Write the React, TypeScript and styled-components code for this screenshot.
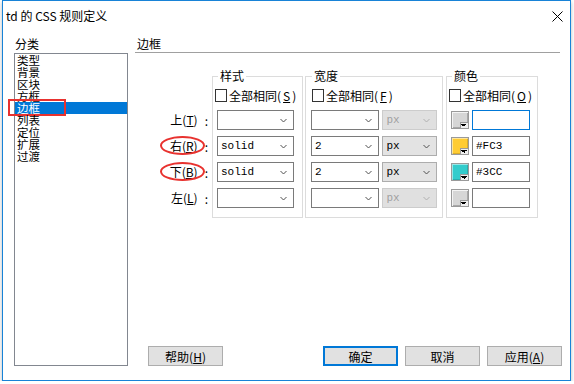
import React from "react";
import styled, { createGlobalStyle, css } from "styled-components";

const GlobalStyle = createGlobalStyle`
  html, body {
    margin: 0;
    padding: 0;
    background: #fff;
  }
  body {
    font-family: "Noto Sans CJK SC", "Liberation Sans", sans-serif;
    font-size: 12px;
    color: #000;
  }
`;

const Window = styled.div`
  box-sizing: border-box;
  width: 569px;
  height: 381px;
  margin-left: 2px;
  border: 1px solid #1883d7;
  background: #fff;
  box-shadow: 0 2px 4px rgba(0, 0, 0, 0.28);
  display: flex;
  flex-direction: column;
`;

const TitleBar = styled.div`
  height: 30px;
  flex: none;
  display: flex;
  align-items: center;
  justify-content: space-between;
  padding: 0 7px 0 3px;
`;

const Title = styled.span`
  font-size: 12px;
  line-height: 16px;
`;

const Main = styled.div`
  flex: 1;
  display: flex;
  align-items: flex-start;
  padding: 5px 0 0 11px;
`;

const CategoryColumn = styled.div`
  width: 114px;
  flex: none;
`;

const Caption = styled.div`
  line-height: 16px;
  height: 17px;
  padding-left: 1px;
`;

const CategoryList = styled.div`
  box-sizing: border-box;
  height: 313px;
  border: 1px solid #828790;
`;

// 12px pitch like the original bitmap font, so the glyphs sit tight
const CategoryItem = styled.div<{ $selected?: boolean }>`
  position: relative;
  height: 12px;
  line-height: 12px;
  font-size: 11.5px;
  padding-left: 2px;
  ${({ $selected }) =>
    $selected &&
    css`
      background: #0078d7;
      color: #fff;
    `}
`;

const Marker = styled.span`
  position: absolute;
  left: -7px;
  top: -3px;
  width: 58px;
  height: 17px;
  box-sizing: border-box;
  border: 2px solid #e8322f;
`;

const Panel = styled.div`
  width: 427px;
  height: 330px;
  margin-left: 7px;
  display: flex;
  flex-direction: column;
`;

const PanelTitle = styled.div`
  width: 423px;
  line-height: 16px;
  padding-left: 2px;
  border-bottom: 1px solid #a0a0a0;
`;

const Content = styled.div`
  display: flex;
  margin-top: 17px;
`;

const LabelColumn = styled.div`
  width: 77px;
  flex: none;
  padding-top: 40px;
  display: flex;
  flex-direction: column;
  gap: 6px;
`;

const LabelRow = styled.div`
  height: 20px;
  display: flex;
  align-items: center;
  justify-content: flex-end;
  padding-right: 4px;
`;

const LabelText = styled.span<{ $circled?: boolean }>`
  position: relative;
  line-height: 16px;
  ${({ $circled }) =>
    $circled &&
    css`
      &::before {
        content: "";
        position: absolute;
        left: -10px;
        right: -7px;
        top: -2px;
        bottom: -1px;
        border: 2px solid #e8322f;
        border-radius: 50%;
      }
    `}
`;

const Colon = styled.span`
  margin-left: 7px;
`;

const Group = styled.fieldset<{ $w: number; $pad: number; $gap: number }>`
  box-sizing: border-box;
  width: ${({ $w }) => $w}px;
  min-width: 0;
  margin: 0 0 0 ${({ $gap }) => $gap}px;
  padding: 6px ${({ $pad }) => $pad}px 9px;
  border: 1px solid #dcdcdc;
  flex: none;
`;

const Legend = styled.legend`
  line-height: 12px;
  padding: 0 2px;
  margin-left: 1px;
`;

const CheckRow = styled.label<{ $offset: number }>`
  height: 14px;
  display: flex;
  align-items: center;
  gap: 2px;
  margin-left: ${({ $offset }) => $offset}px;
  white-space: nowrap;
`;

const CheckBox = styled.span`
  box-sizing: border-box;
  width: 12px;
  height: 13px;
  border: 1px solid #333;
  background: #fff;
  flex: none;
`;

const Rows = styled.div`
  margin-top: 8px;
  display: flex;
  flex-direction: column;
  gap: 6px;
`;

const Row = styled.div<{ $gap?: number }>`
  height: 20px;
  display: flex;
  align-items: center;
  gap: ${({ $gap }) => $gap ?? 3}px;
`;

type Tone = "white" | "face" | "off";

const SelectBox = styled.div<{ $w: number; $tone: Tone }>`
  box-sizing: border-box;
  width: ${({ $w }) => $w}px;
  height: 20px;
  display: flex;
  align-items: center;
  justify-content: space-between;
  padding: 0 6px 0 3px;
  font-family: "Liberation Mono", monospace;
  font-size: 11px;
  border: 1px solid #7a7a7a;
  background: #fff;
  color: #000;
  ${({ $tone }) =>
    $tone === "face" &&
    css`
      border-color: #adadad;
      background: #e3e3e3;
    `}
  ${({ $tone }) =>
    $tone === "off" &&
    css`
      border-color: #cccccc;
      background: #e0e0e0;
      color: #a0a0a0;
    `}
`;

const Swatch = styled.span<{ $color?: string }>`
  position: relative;
  box-sizing: border-box;
  width: 18px;
  height: 18px;
  flex: none;
  border: 1px solid #9a9a9a;
  background: ${({ $color }) => $color ?? "#d6d6d6"};
  box-shadow: inset 1px 1px 0 ${({ $color }) => ($color ? "rgba(255,255,255,0.5)" : "#f4f4f4")},
    inset -1px -1px 0 ${({ $color }) => ($color ? "rgba(0,0,0,0.15)" : "#a8a8a8")};
  &::after {
    content: "";
    position: absolute;
    right: 0;
    bottom: 0;
    width: 8px;
    height: 6px;
    background-color: #f0f0f0;
    border-top: 1px solid #9a9a9a;
    border-left: 1px solid #9a9a9a;
    box-sizing: border-box;
    background-image: linear-gradient(45deg, transparent 50%, #000 50%),
      linear-gradient(-45deg, transparent 50%, #000 50%);
    background-size: 3px 3px, 3px 3px;
    background-position: 0px 1px, 3px 1px;
    background-repeat: no-repeat;
  }
`;

const TextBox = styled.div<{ $focused?: boolean }>`
  box-sizing: border-box;
  width: 58px;
  height: 20px;
  display: flex;
  align-items: center;
  padding-left: 3px;
  font-family: "Liberation Mono", monospace;
  font-size: 11px;
  border: 1px solid ${({ $focused }) => ($focused ? "#0078d7" : "#7a7a7a")};
  background: #fff;
`;

const Footer = styled.div`
  margin-top: auto;
  display: flex;
  align-items: center;
  padding-left: 13px;
`;

const ButtonGroup = styled.div`
  margin-left: auto;
  display: flex;
  gap: 7px;
`;

const Button = styled.button<{ $default?: boolean }>`
  box-sizing: border-box;
  width: 75px;
  height: 20px;
  padding: 0;
  font-family: inherit;
  font-size: 12px;
  color: #000;
  background: #e1e1e1;
  border: 1px solid #adadad;
  ${({ $default }) =>
    $default &&
    css`
      border: 2px solid #0078d7;
    `}
`;

const Chevron = ({ light }: { light?: boolean }) => (
  <svg width="7" height="5" viewBox="0 0 7 5">
    <polyline
      points="0.5,1 3.5,4 6.5,1"
      fill="none"
      stroke={light ? "#b0b0b0" : "#505050"}
      strokeWidth="1"
    />
  </svg>
);

const Select = ({
  value,
  w,
  tone = "white",
}: {
  value?: string;
  w: number;
  tone?: Tone;
}) => (
  <SelectBox $w={w} $tone={tone}>
    <span>{value}</span>
    <Chevron light={tone === "off"} />
  </SelectBox>
);

const categories = ["类型", "背景", "区块", "方框", "边框", "列表", "定位", "扩展", "过渡"];

const sides = [
  { name: "上", key: "T" },
  { name: "右", key: "R", circled: true },
  { name: "下", key: "B", circled: true },
  { name: "左", key: "L" },
];

const rows = [
  { style: "", width: "", on: false, color: undefined as string | undefined, hex: "" },
  { style: "solid", width: "2", on: true, color: "#ffcc33", hex: "#FC3" },
  { style: "solid", width: "2", on: true, color: "#33cccc", hex: "#3CC" },
  { style: "", width: "", on: false, color: undefined, hex: "" },
];

const Key = ({ k }: { k: string }) => (
  <>
    (<u>{k}</u>)
  </>
);

export default function App() {
  return (
    <>
      <GlobalStyle />
      <Window>
        <TitleBar>
          <Title>td 的 CSS 规则定义</Title>
          <svg width="11" height="11" viewBox="0 0 11 11">
            <path d="M0.5 0.5 L10.5 10.5 M10.5 0.5 L0.5 10.5" stroke="#000" strokeWidth="1" />
          </svg>
        </TitleBar>
        <Main>
          <CategoryColumn>
            <Caption>分类</Caption>
            <CategoryList>
              {categories.map((c) => (
                <CategoryItem key={c} $selected={c === "边框"}>
                  {c}
                  {c === "边框" && <Marker />}
                </CategoryItem>
              ))}
            </CategoryList>
          </CategoryColumn>
          <Panel>
            <PanelTitle>边框</PanelTitle>
            <Content>
              <LabelColumn>
                {sides.map((s) => (
                  <LabelRow key={s.key}>
                    <LabelText $circled={s.circled}>
                      {s.name}
                      <Key k={s.key} />
                    </LabelText>
                    <Colon>:</Colon>
                  </LabelRow>
                ))}
              </LabelColumn>

              <Group $w={91} $pad={4} $gap={0}>
                <Legend>样式</Legend>
                <CheckRow $offset={-2}>
                  <CheckBox />
                  全部相同<Key k="S" />
                </CheckRow>
                <Rows>
                  {rows.map((r, i) => (
                    <Row key={i}>
                      <Select w={77} value={r.style} />
                    </Row>
                  ))}
                </Rows>
              </Group>

              <Group $w={138} $pad={5} $gap={2}>
                <Legend>宽度</Legend>
                <CheckRow $offset={1}>
                  <CheckBox />
                  全部相同<Key k="F" />
                </CheckRow>
                <Rows>
                  {rows.map((r, i) => (
                    <Row key={i}>
                      <Select w={69} value={r.width} />
                      <Select w={55} value="px" tone={r.on ? "face" : "off"} />
                    </Row>
                  ))}
                </Rows>
              </Group>

              <Group $w={92} $pad={4} $gap={3}>
                <Legend>颜色</Legend>
                <CheckRow $offset={-2}>
                  <CheckBox />
                  全部相同<Key k="O" />
                </CheckRow>
                <Rows>
                  {rows.map((r, i) => (
                    <Row key={i} $gap={3}>
                      <Swatch $color={r.color} />
                      <TextBox $focused={i === 0}>{r.hex}</TextBox>
                    </Row>
                  ))}
                </Rows>
              </Group>
            </Content>
            <Footer>
              <Button>
                帮助<Key k="H" />
              </Button>
              <ButtonGroup>
                <Button $default>确定</Button>
                <Button>取消</Button>
                <Button>
                  应用<Key k="A" />
                </Button>
              </ButtonGroup>
            </Footer>
          </Panel>
        </Main>
      </Window>
    </>
  );
}
